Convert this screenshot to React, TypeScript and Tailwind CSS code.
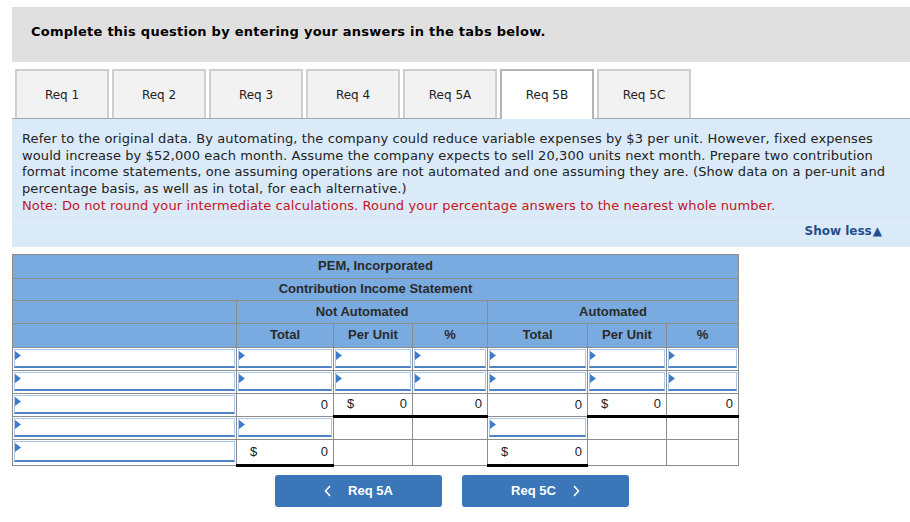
import React from 'react'

const tabs = ['Req 1', 'Req 2', 'Req 3', 'Req 4', 'Req 5A', 'Req 5B', 'Req 5C']

function Tri() {
  return (
    <svg width="6" height="9" viewBox="0 0 6 9" className="absolute left-0 top-[1px]">
      <path d="M0 0 L6 4.5 L0 9 Z" fill="#3d7cc9" />
    </svg>
  )
}

function InputCell({ thick = false, h = 'h-[19px]' }: { thick?: boolean; h?: string }) {
  return (
    <td className={`border border-[#8c8c8c] p-[1px] align-top ${thick ? 'border-b-[3px] border-b-black' : ''}`}>
      <div className={`relative w-full border border-[#a9c8ec] border-b-2 border-b-[#4f82c2] bg-white ${h}`}>
        <Tri />
      </div>
    </td>
  )
}

function Cell({ dollar, value, thick = false }: { dollar?: boolean; value?: string; thick?: boolean }) {
  return (
    <td className={`border border-[#8c8c8c] bg-white px-[5px] ${thick ? 'border-b-[3px] border-b-black' : ''}`}>
      <div className="flex items-center justify-between text-[13px] text-[#222]">
        <span className="pl-[8px]">{dollar ? '$' : ''}</span>
        <span>{value ?? ''}</span>
      </div>
    </td>
  )
}

const hd = 'border border-[#8c8c8c] bg-[#79abe0] text-center font-bold text-[13px] text-[#2a2a2a]'

export default function App() {
  return (
    <div className="w-[910px] bg-white pl-[12px] pt-[7px] font-['DejaVu_Sans',sans-serif] text-[#1a1a1a]">
      <div className="flex h-[55px] w-[898px] items-center bg-[#e0e0e0] pb-[6px] pl-[19px] text-[13px] font-bold tracking-[0.25px] text-black">
        Complete this question by entering your answers in the tabs below.
      </div>

      <div className="mt-[7px] flex w-[898px] gap-[3px] border-b border-b-[#a8a8a8] pl-[3px]">
        {tabs.map((t) => (
          <div
            key={t}
            className={
              t === 'Req 5B'
                ? 'relative -mb-[1px] flex h-[50px] w-[94px] items-center justify-center border-2 border-b-0 border-[#b4b4b4] bg-white text-[12px] text-[#222]'
                : 'flex h-[49px] w-[94px] items-center justify-center border-2 border-b-0 border-[#cfcfcf] bg-[#f2f2f2] text-[12px] text-[#222]'
            }
          >
            {t}
          </div>
        ))}
      </div>

      <div className="w-[898px] bg-[#dbeaf9]">
        <div className="border-b border-b-[#e6f0fa] pl-[10px] pr-[14px] pt-[12px] pb-[7px] text-[13px] leading-[16.7px] tracking-[0.1px] text-[#222]">
          <p>
            Refer to the original data. By automating, the company could reduce variable expenses by $3 per unit. However, fixed expenses would increase by $52,000 each month. Assume the company expects to sell 20,300 units next month. Prepare two contribution format income statements, one assuming operations are not automated and one assuming they are. (Show data on a per-unit and percentage basis, as well as in total, for each alternative.)
          </p>
          <p className="text-[#c4161c]">
            Note: Do not round your intermediate calculations. Round your percentage answers to the nearest whole number.
          </p>
        </div>
        <div className="flex h-[24px] items-start justify-end pr-[28px] pt-[1px] text-[12px] font-bold leading-[14px] text-[#1f4f8f]">
          Show less<span className="ml-[1px] text-[12px]">▲</span>
        </div>
      </div>

      <table className="mt-[7px] w-[726px] table-fixed border-collapse font-['Liberation_Sans',Arial,sans-serif]">
        <colgroup>
          <col className="w-[224px]" />
          <col className="w-[97px]" />
          <col className="w-[79px]" />
          <col className="w-[75px]" />
          <col className="w-[100px]" />
          <col className="w-[79px]" />
          <col className="w-[72px]" />
        </colgroup>
        <tbody>
          <tr className="h-[24px]">
            <td colSpan={7} className={hd}>PEM, Incorporated</td>
          </tr>
          <tr className="h-[22px]">
            <td colSpan={7} className={hd}>Contribution Income Statement</td>
          </tr>
          <tr className="h-[23px]">
            <td className={hd}></td>
            <td colSpan={3} className={hd}>Not Automated</td>
            <td colSpan={3} className={hd}>Automated</td>
          </tr>
          <tr className="h-[24px]">
            <td className={hd}></td>
            <td className={hd}>Total</td>
            <td className={hd}>Per Unit</td>
            <td className={hd}>%</td>
            <td className={hd}>Total</td>
            <td className={hd}>Per Unit</td>
            <td className={hd}>%</td>
          </tr>
          <tr className="h-[23px]">
            {[0, 1, 2, 3, 4, 5, 6].map((i) => <InputCell key={i} />)}
          </tr>
          <tr className="h-[23px]">
            {[0, 1, 2, 3, 4, 5, 6].map((i) => <InputCell key={i} />)}
          </tr>
          <tr className="h-[23px]">
            <InputCell />
            <Cell value="0" />
            <Cell dollar value="0" thick />
            <Cell value="0" thick />
            <Cell value="0" />
            <Cell dollar value="0" thick />
            <Cell value="0" thick />
          </tr>
          <tr className="h-[23px]">
            <InputCell />
            <InputCell />
            <Cell />
            <Cell />
            <InputCell />
            <Cell />
            <Cell />
          </tr>
          <tr className="h-[26px]">
            <InputCell h="h-[21px]" />
            <Cell dollar value="0" thick />
            <Cell />
            <Cell />
            <Cell dollar value="0" thick />
            <Cell />
            <Cell />
          </tr>
        </tbody>
      </table>

      <div className="mt-[8px] flex gap-[20px] pb-[16px] pl-[263px] font-['Liberation_Sans',Arial,sans-serif]">
        <button className="flex h-[32px] w-[167px] items-center justify-center gap-[16px] rounded-[3px] bg-[#3a76b8] text-[13px] font-bold text-white">
          <svg width="8" height="12" viewBox="0 0 8 12"><path d="M6 1 L1.5 6 L6 11" stroke="white" strokeWidth="1.6" fill="none" /></svg>
          Req 5A
        </button>
        <button className="flex h-[32px] w-[167px] items-center justify-center gap-[16px] rounded-[3px] bg-[#3a76b8] text-[13px] font-bold text-white">
          Req 5C
          <svg width="8" height="12" viewBox="0 0 8 12"><path d="M2 1 L6.5 6 L2 11" stroke="white" strokeWidth="1.6" fill="none" /></svg>
        </button>
      </div>
    </div>
  )
}
